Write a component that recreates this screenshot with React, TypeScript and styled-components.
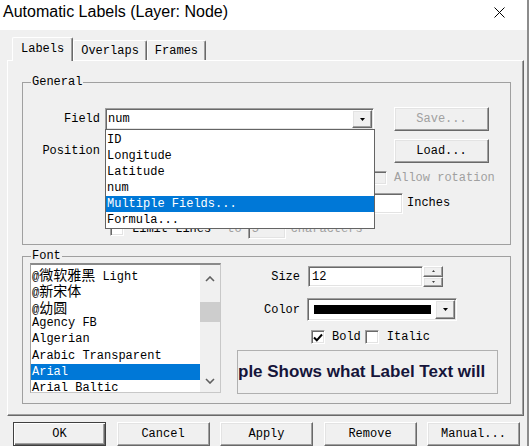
import React from "react";
import styled, { createGlobalStyle, css } from "styled-components";

const UI_FONT = `"Liberation Mono", "Noto Sans CJK SC", monospace`;

const GlobalStyle = createGlobalStyle`
  html, body { margin: 0; padding: 0; background: #ffffff; }
  body {
    width: 531px; height: 446px; overflow: hidden;
    font-family: ${UI_FONT}; font-size: 12px; color: #000;
  }
  * { box-sizing: border-box; }
`;

const raised = css`
  border-style: solid;
  border-width: 1px;
  border-color: #ffffff #696969 #696969 #ffffff;
  box-shadow: inset -1px -1px 0 #a0a0a0, inset 1px 1px 0 #e3e3e3;
  background: #f0f0f0;
`;

const sunken = css`
  border-style: solid;
  border-width: 1px;
  border-color: #a0a0a0 #ffffff #ffffff #a0a0a0;
  box-shadow: inset 1px 1px 0 #696969, inset -1px -1px 0 #e3e3e3;
  background: #ffffff;
`;

const Window = styled.div`
  width: 529px;
  height: 446px;
  border-right: 2px solid #8c8c8c;
  background: #f0f0f0;
  display: flex;
  flex-direction: column;
`;

const TitleBar = styled.div`
  height: 30px;
  flex: none;
  background: #ffffff;
  display: flex;
  align-items: flex-start;
  justify-content: space-between;
  padding: 3px 22px 0 3px;
`;

const TitleText = styled.span`
  font-family: "Liberation Sans", "Noto Sans", sans-serif;
  font-size: 16px;
  line-height: 18px;
  color: #000;
`;

const CloseIcon = styled.svg`
  margin-top: 4px;
`;

const Client = styled.div`
  flex: 1;
  display: flex;
  flex-direction: column;
  padding: 7px 4px 0 7px;
`;

const TabStrip = styled.div`
  height: 24px;
  margin-bottom: -1px;
  display: flex;
  align-items: flex-end;
  padding-left: 5px;
  position: relative;
  z-index: 2;
`;

const Tab = styled.div<{ $active?: boolean }>`
  height: ${(p) => (p.$active ? 24 : 20)}px;
  margin-bottom: ${(p) => (p.$active ? 0 : 1)}px;
  padding: ${(p) => (p.$active ? "4px 8px 0" : "0 7px")};
  border-top: 1px solid #ffffff;
  border-left: 1px solid #ffffff;
  border-right: 1px solid #696969;
  box-shadow: inset -1px 0 0 #a0a0a0;
  border-radius: 2px 2px 0 0;
  background: #f0f0f0;
  display: flex;
  align-items: ${(p) => (p.$active ? "flex-start" : "center")};
  line-height: 14px;
  white-space: nowrap;
`;

const TabPanel = styled.div`
  width: 517px;
  height: 356px;
  flex: none;
  border-style: solid;
  border-width: 1px;
  border-color: #ffffff #696969 #696969 #ffffff;
  box-shadow: inset -1px -1px 0 #a0a0a0;
  padding-left: 14px;
  display: flex;
  flex-direction: column;
`;

const Group = styled.fieldset<{ $h: number; $mt: number }>`
  margin: ${(p) => p.$mt}px 0 0 0;
  padding: 0;
  width: 489px;
  height: ${(p) => p.$h}px;
  min-width: 0;
  border: 1px solid #a0a0a0;
  display: flex;
  flex-direction: column;
`;

const Legend = styled.legend`
  margin-left: 8px;
  padding: 0 1px;
  font-size: 12px;
  line-height: 14px;
  height: 14px;
`;

const Row = styled.div<{ $mt: number; $h: number }>`
  display: flex;
  align-items: center;
  margin-top: ${(p) => p.$mt}px;
  height: ${(p) => p.$h}px;
  flex: none;
`;

const FieldLabel = styled.span<{ $w: number; $pr?: number }>`
  width: ${(p) => p.$w}px;
  padding-right: ${(p) => p.$pr ?? 5}px;
  text-align: right;
  flex: none;
  white-space: nowrap;
`;

const Text = styled.span<{ $ml?: number; $disabled?: boolean }>`
  margin-left: ${(p) => p.$ml ?? 0}px;
  color: ${(p) => (p.$disabled ? "#a0a0a0" : "#000")};
  white-space: nowrap;
  flex: none;
`;

const Combo = styled.div<{ $w: number; $h?: number; $ml?: number }>`
  ${sunken};
  position: relative;
  width: ${(p) => p.$w}px;
  height: ${(p) => p.$h ?? 22}px;
  margin-left: ${(p) => p.$ml ?? 0}px;
  flex: none;
  display: flex;
  align-items: center;
  justify-content: space-between;
  padding: 0 1px 0 2px;
`;

const ComboValue = styled.span`
  white-space: nowrap;
`;

const DropButton = styled.div<{ $h?: number }>`
  ${raised};
  width: 20px;
  height: ${(p) => p.$h ?? 18}px;
  flex: none;
  margin-left: auto;
  display: flex;
  align-items: center;
  justify-content: center;
`;

const DropList = styled.ul`
  position: absolute;
  left: -1px;
  top: 20px;
  width: 270px;
  height: 100px;
  margin: 0;
  padding: 2px 0 0 0;
  list-style: none;
  background: #ffffff;
  border: 1px solid #646464;
  z-index: 10;
`;

const DropItem = styled.li<{ $selected?: boolean }>`
  height: 16px;
  line-height: 16px;
  padding-left: 1px;
  white-space: nowrap;
  background: ${(p) => (p.$selected ? "#0078d7" : "transparent")};
  color: ${(p) => (p.$selected ? "#ffffff" : "#000")};
`;

const Button = styled.div<{ $w?: number; $disabled?: boolean; $default?: boolean; $ml?: number }>`
  ${raised};
  width: ${(p) => p.$w ?? 95}px;
  height: 24px;
  margin-left: ${(p) => p.$ml ?? 0}px;
  flex: none;
  display: flex;
  align-items: center;
  justify-content: center;
  color: ${(p) => (p.$disabled ? "#a0a0a0" : "#000")};
  ${(p) =>
    p.$default &&
    css`
      border-color: #404040 #404040 #404040 #404040;
      box-shadow: inset 1px 1px 0 #ffffff, inset -1px -1px 0 #696969, inset -2px -2px 0 #a0a0a0;
    `}
`;

const CheckBox = styled.span<{ $disabled?: boolean; $ml?: number }>`
  ${sunken};
  width: 14px;
  height: 14px;
  flex: none;
  margin-left: ${(p) => p.$ml ?? 0}px;
  display: inline-flex;
  align-items: center;
  justify-content: center;
  background: ${(p) => (p.$disabled ? "#f0f0f0" : "#ffffff")};
`;

const TextBox = styled.div<{ $w: number; $h: number; $ml?: number; $disabled?: boolean }>`
  ${sunken};
  width: ${(p) => p.$w}px;
  height: ${(p) => p.$h}px;
  margin-left: ${(p) => p.$ml ?? 0}px;
  flex: none;
  display: flex;
  align-items: center;
  padding-left: 3px;
  background: ${(p) => (p.$disabled ? "#f0f0f0" : "#ffffff")};
  color: ${(p) => (p.$disabled ? "#a0a0a0" : "#000")};
`;

const FontBody = styled.div`
  display: flex;
  padding-left: 7px;
`;

const ListBox = styled.div`
  width: 191px;
  height: 130px;
  flex: none;
  border-top: 2px solid #8a8a8a;
  border-left: 1px solid #a0a0a0;
  border-right: 1px solid #c8c8c8;
  border-bottom: 1px solid #c8c8c8;
  background: #ffffff;
  display: flex;
  overflow: hidden;
`;

const ListItems = styled.ul`
  flex: 1;
  margin: 0;
  padding: 1px 0 0 0;
  list-style: none;
  overflow: hidden;
`;

const ListItem = styled.li<{ $selected?: boolean }>`
  height: 16.33px;
  line-height: 16px;
  padding-left: 1px;
  white-space: nowrap;
  background: ${(p) => (p.$selected ? "#0078d7" : "transparent")};
  color: ${(p) => (p.$selected ? "#ffffff" : "#000")};
`;

const Cjk = styled.span`
  font-family: "Noto Sans CJK SC", sans-serif;
  font-size: 14px;
`;

const ScrollBar = styled.div`
  width: 20px;
  flex: none;
  background: #f0f0f0;
  display: flex;
  flex-direction: column;
  align-items: center;
`;

const ScrollArrow = styled.div<{ $h: number }>`
  height: ${(p) => p.$h}px;
  width: 100%;
  flex: none;
  display: flex;
  align-items: center;
  justify-content: center;
`;

const ScrollThumb = styled.div`
  width: 100%;
  height: 20px;
  margin-top: 9px;
  background: #cdcdcd;
  flex: none;
`;

const ScrollTrack = styled.div`
  flex: 1;
`;

const FontControls = styled.div`
  width: 261px;
  margin-left: 16px;
  display: flex;
  flex-direction: column;
`;

const SpinBox = styled.div`
  width: 20px;
  height: 21px;
  flex: none;
  display: flex;
  flex-direction: column;
`;

const SpinHalf = styled.div`
  ${raised};
  flex: 1;
  display: flex;
  align-items: center;
  justify-content: center;
`;

const ColorBar = styled.div`
  width: 117px;
  height: 9px;
  margin-left: 4px;
  background: #000000;
  flex: none;
`;

const Sample = styled.div`
  margin-top: 5px;
  width: 261px;
  height: 44px;
  border: 1px solid #b0b0b0;
  display: flex;
  align-items: center;
  overflow: hidden;
  white-space: nowrap;
  font-family: "Liberation Sans", Arial, sans-serif;
  font-weight: bold;
  font-size: 17px;
  color: #15153a;
`;

const ButtonBar = styled.div`
  display: flex;
  gap: 10.5px;
  margin-top: 6px;
  padding-left: 6px;
`;

const Caret = () => (
  <svg width="5" height="3" viewBox="0 0 5 3">
    <polygon points="0,0 5,0 2.5,3" fill="#000" />
  </svg>
);

const TinyTri = ({ up }: { up?: boolean }) => (
  <svg width="3" height="2" viewBox="0 0 3 2">
    <polygon points={up ? "0,2 3,2 1.5,0" : "0,0 3,0 1.5,2"} fill="#404040" />
  </svg>
);

const Chevron = ({ up }: { up?: boolean }) => (
  <svg width="10" height="6" viewBox="0 0 10 6">
    <polyline
      points={up ? "1,5 5,1 9,5" : "1,1 5,5 9,1"}
      fill="none"
      stroke="#606060"
      strokeWidth="1.6"
    />
  </svg>
);

const CheckMark = () => (
  <svg width="10" height="9" viewBox="0 0 10 9">
    <polyline points="1,4.5 3.8,7.3 9,1.5" fill="none" stroke="#000" strokeWidth="2" />
  </svg>
);

const fieldItems = ["ID", "Longitude", "Latitude", "num", "Multiple Fields...", "Formula..."];

export default function App() {
  return (
    <>
      <GlobalStyle />
      <Window>
        <TitleBar>
          <TitleText>Automatic Labels (Layer: Node)</TitleText>
          <CloseIcon width="11" height="11" viewBox="0 0 11 11">
            <path d="M0.5 0.5 L10.5 10.5 M10.5 0.5 L0.5 10.5" stroke="#000" strokeWidth="1" />
          </CloseIcon>
        </TitleBar>
        <Client>
          <TabStrip>
            <Tab $active>Labels</Tab>
            <Tab>Overlaps</Tab>
            <Tab>Frames</Tab>
          </TabStrip>
          <TabPanel>
            <Group $mt={14} $h={170}>
              <Legend>General</Legend>
              <Row $mt={18} $h={24}>
                <FieldLabel $w={82}>Field</FieldLabel>
                <Combo $w={269}>
                  <ComboValue>num</ComboValue>
                  <DropButton>
                    <Caret />
                  </DropButton>
                  <DropList>
                    {fieldItems.map((f) => (
                      <DropItem key={f} $selected={f === "Multiple Fields..."}>
                        {f}
                      </DropItem>
                    ))}
                  </DropList>
                </Combo>
                <Button $disabled $ml={20}>Save...</Button>
              </Row>
              <Row $mt={8} $h={24}>
                <FieldLabel $w={82}>Position</FieldLabel>
                <Combo $w={269}>
                  <DropButton>
                    <Caret />
                  </DropButton>
                </Combo>
                <Button $ml={20}>Load...</Button>
              </Row>
              <Row $mt={5} $h={20}>
                <CheckBox $disabled $ml={350} />
                <Text $disabled $ml={7}>Allow rotation</Text>
              </Row>
              <Row $mt={4} $h={22}>
                <TextBox $w={100} $h={21} $ml={280} />
                <Text $ml={4}>Inches</Text>
              </Row>
              <Row $mt={4} $h={22}>
                <CheckBox $ml={87} />
                <Text $ml={8}>Limit Lines</Text>
                <Text $disabled $ml={16}>to</Text>
                <TextBox $disabled $w={38} $h={20} $ml={6}>5</TextBox>
                <Text $disabled $ml={5}>characters</Text>
              </Row>
            </Group>
            <Group $mt={4} $h={155}>
              <Legend>Font</Legend>
              <FontBody>
                <ListBox>
                  <ListItems>
                    <ListItem>
                      @<Cjk>微软雅黑</Cjk> Light
                    </ListItem>
                    <ListItem>
                      @<Cjk>新宋体</Cjk>
                    </ListItem>
                    <ListItem>
                      @<Cjk>幼圆</Cjk>
                    </ListItem>
                    <ListItem>Agency FB</ListItem>
                    <ListItem>Algerian</ListItem>
                    <ListItem>Arabic Transparent</ListItem>
                    <ListItem $selected>Arial</ListItem>
                    <ListItem>Arial Baltic</ListItem>
                  </ListItems>
                  <ScrollBar>
                    <ScrollArrow $h={28}>
                      <Chevron up />
                    </ScrollArrow>
                    <ScrollThumb />
                    <ScrollTrack />
                    <ScrollArrow $h={22}>
                      <Chevron />
                    </ScrollArrow>
                  </ScrollBar>
                </ListBox>
                <FontControls>
                  <Row $mt={3} $h={21}>
                    <FieldLabel $w={63} $pr={0}>Size</FieldLabel>
                    <TextBox $w={115} $h={21} $ml={8}>12</TextBox>
                    <SpinBox>
                      <SpinHalf>
                        <TinyTri up />
                      </SpinHalf>
                      <SpinHalf>
                        <TinyTri />
                      </SpinHalf>
                    </SpinBox>
                  </Row>
                  <Row $mt={11} $h={23}>
                    <FieldLabel $w={63} $pr={0}>Color</FieldLabel>
                    <Combo $w={150} $h={23} $ml={7}>
                      <ColorBar />
                      <DropButton $h={19}>
                        <Caret />
                      </DropButton>
                    </Combo>
                  </Row>
                  <Row $mt={8} $h={16}>
                    <CheckBox $ml={74}>
                      <CheckMark />
                    </CheckBox>
                    <Text $ml={7}>Bold</Text>
                    <CheckBox $ml={4} />
                    <Text $ml={8}>Italic</Text>
                  </Row>
                  <Sample>ple Shows what Label Text will</Sample>
                </FontControls>
              </FontBody>
            </Group>
          </TabPanel>
          <ButtonBar>
            <Button $w={93} $default>OK</Button>
            <Button $w={93}>Cancel</Button>
            <Button $w={93}>Apply</Button>
            <Button $w={93}>Remove</Button>
            <Button $w={93}>Manual...</Button>
          </ButtonBar>
        </Client>
      </Window>
    </>
  );
}
